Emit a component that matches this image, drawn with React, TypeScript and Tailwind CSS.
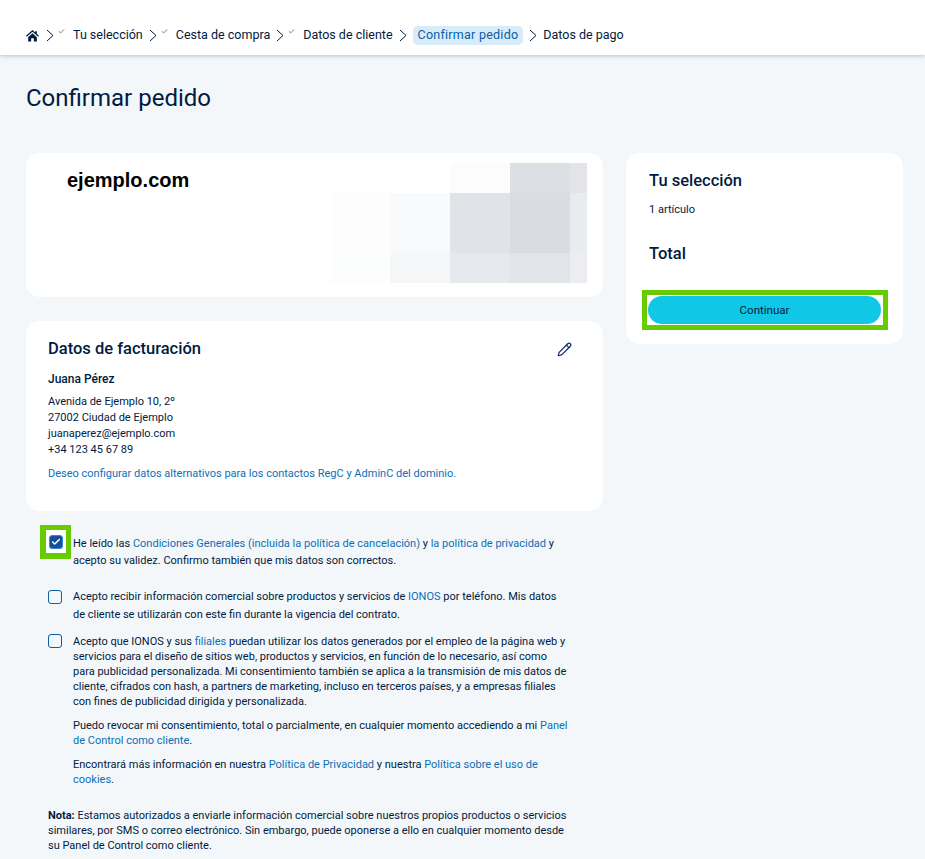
import { Check, Pencil } from "lucide-react"
import { ReactNode } from "react"

const mosaic = [
  "#ffffff", "#ffffff", "#fcfcfd", "#dcdfe3", "#e3e4e8",
  "#fdfdfd", "#f9fafb", "#e0e3e8", "#d9dce1", "#e9ecef",
  "#fcfdfd", "#f5f6f8", "#e6e9ed", "#e1e4e9", "#ecedf0",
]

function Chevron() {
  return (
    <svg viewBox="0 0 8 13" className="h-[13px] w-[8px] shrink-0 fill-none stroke-[#001b41] stroke-1">
      <path d="M1 1l6 5.5L1 12" />
    </svg>
  )
}

function Crumb({ label, done }: { label: string; done?: boolean }) {
  return (
    <>
      <Chevron />
      {done && <Check className="mb-2 ml-[-2px] h-[7px] w-[7px] text-[#3f8f2f]" strokeWidth={3} />}
      <span className={done ? "ml-[2px]" : ""}>{label}</span>
    </>
  )
}

function A({ children }: { children: ReactNode }) {
  return <a className="text-[#0b6fb8]">{children}</a>
}

function Box() {
  return <div className="h-[14px] w-[14px] shrink-0 rounded-[3px] border border-[#0b5ea8]" />
}

export default function App() {
  return (
    <div className="h-[859px] overflow-hidden bg-[#f4f7fa] font-['Roboto',sans-serif] text-[#001b41]">
      {/* Steps */}
      <header className="flex h-[55px] items-center gap-[6px] bg-white pl-[26px] pt-[16px] text-[12.5px] shadow-[0_1px_4px_rgba(0,27,65,0.25)]">
        <svg viewBox="0 0 24 24" className="mr-[1px] h-[13px] w-[13px] fill-[#001b41]">
          <path d="M12 2 0 12.5l1.5 1.7L12 5l10.5 9.2 1.5-1.7-4-3.5V4h-3v2.3z" />
          <path d="M4 15l8-7 8 7v8h-5.5v-6h-5v6H4z" />
        </svg>
        <Crumb label="Tu selección" done />
        <Crumb label="Cesta de compra" done />
        <Crumb label="Datos de cliente" done />
        <Chevron />
        <span className="rounded-[5px] bg-[#d8ebf9] px-[5px] tracking-[0.25px] text-[#0b5ea8]">Confirmar pedido</span>
        <Crumb label="Datos de pago" />
      </header>

      <main className="px-[26px]">
        <h1 className="mt-[26px] text-[24px] leading-[34px]">Confirmar pedido</h1>

        <div className="mt-[38px] flex items-start gap-[23px]">
          <div className="w-[577px] shrink-0">
            {/* Domain */}
            <section className="flex h-[144px] justify-between rounded-[14px] bg-white pl-[41px] pr-[16px] pt-[10px]">
              <p className="font-['Liberation_Sans',sans-serif] text-[20px] font-bold leading-[34px] text-black">ejemplo.com</p>
              <div className="grid grid-cols-[60px_60px_60px_60px_17px] grid-rows-[30px_60px_30px] self-start">
                {mosaic.map((c, i) => (
                  <div key={i} style={{ backgroundColor: c }} />
                ))}
              </div>
            </section>

            {/* Billing */}
            <section className="mt-[24px] h-[190px] rounded-[14px] bg-white px-[22px] pt-[16px]">
              <div className="flex items-center justify-between pr-[9px]">
                <h2 className="text-[16.5px] font-medium leading-[24px]">Datos de facturación</h2>
                <Pencil className="h-[15px] w-[15px] text-[#0f2d6b]" strokeWidth={2} />
              </div>
              <p className="mt-[9px] text-[12px] font-medium leading-[18px]">Juana Pérez</p>
              <div className="mt-[6px] text-[11px] leading-[16px]">
                <p>Avenida de Ejemplo 10, 2º</p>
                <p>27002 Ciudad de Ejemplo</p>
                <p>juanaperez@ejemplo.com</p>
                <p>+34 123 45 67 89</p>
              </div>
              <p className="mt-[8px] text-[11px] leading-[16px]"><A>Deseo configurar datos alternativos para los contactos RegC y AdminC del dominio.</A></p>
            </section>

            {/* Consents */}
            <div className="mt-[14px] w-[543px] text-[11px]">
              <div className="flex gap-[2px] pl-[14px] leading-[17px]">
                <div className="flex h-[34px] w-[31px] shrink-0 items-center justify-center border-[5px] border-b-[6px] border-l-[6px] border-[#66cc00] bg-white">
                  <div className="flex h-[14px] w-[14px] items-center justify-center rounded-[3px] border border-[#3a86d6] bg-[#17509a]">
                    <Check className="h-[10px] w-[10px] text-white" strokeWidth={3.5} />
                  </div>
                </div>
                <p className="pt-[10px]">
                  He leído las <A>Condiciones Generales (incluida la política de cancelación)</A> y <A>la política de privacidad</A> y acepto su validez. Confirmo también que mis datos son correctos.
                </p>
              </div>
              <div className="mt-[19px] flex gap-[11px] pl-[22px] leading-[17.5px]">
                <div className="mt-[2px]">
                  <Box />
                </div>
                <p>
                  Acepto recibir información comercial sobre productos y servicios de <A>IONOS</A> por teléfono. Mis datos de cliente se utilizarán con este fin durante la vigencia del contrato.
                </p>
              </div>
              <div className="mt-[11px] flex gap-[11px] pl-[22px] leading-[15px]">
                <Box />
                <div>
                  <p>
                    Acepto que IONOS y sus <A>filiales</A> puedan utilizar los datos generados por el empleo de la página web y servicios para el diseño de sitios web, productos y servicios, en función de lo necesario, así como para publicidad personalizada. Mi consentimiento también se aplica a la transmisión de mis datos de cliente, cifrados con hash, a partners de marketing, incluso en terceros países, y a empresas filiales con fines de publicidad dirigida y personalizada.
                  </p>
                  <p className="mt-[9px]">
                    Puedo revocar mi consentimiento, total o parcialmente, en cualquier momento accediendo a mi <A>Panel de Control como cliente</A>.
                  </p>
                  <p className="mt-[9px]">
                    Encontrará más información en nuestra <A>Política de Privacidad</A> y nuestra <A>Política sobre el uso de cookies</A>.
                  </p>
                </div>
              </div>
              <p className="mt-[21px] pl-[22px] leading-[15px]">
                <strong>Nota:</strong> Estamos autorizados a enviarle información comercial sobre nuestros propios productos o servicios similares, por SMS o correo electrónico. Sin embargo, puede oponerse a ello en cualquier momento desde su Panel de Control como cliente.
              </p>
            </div>
          </div>

          {/* Summary */}
          <aside className="h-[191px] w-[277px] rounded-[14px] bg-white px-[16px] pt-[16px]">
            <h2 className="pl-[7px] text-[16.5px] font-medium leading-[24px]">Tu selección</h2>
            <p className="mt-[9px] pl-[7px] text-[11px] leading-[16px]">1 artículo</p>
            <h2 className="mt-[24px] pl-[7px] text-[16.5px] font-medium leading-[24px]">Total</h2>
            <div className="mt-[24px] w-[246px] border-[5px] border-[#66cc00] bg-white p-[1px]">
              <button className="h-[28px] w-[233px] rounded-full bg-[#11c7e6] pt-[1px] text-[11.5px] text-[#001b41]">Continuar</button>
            </div>
          </aside>
        </div>
      </main>
    </div>
  )
}
